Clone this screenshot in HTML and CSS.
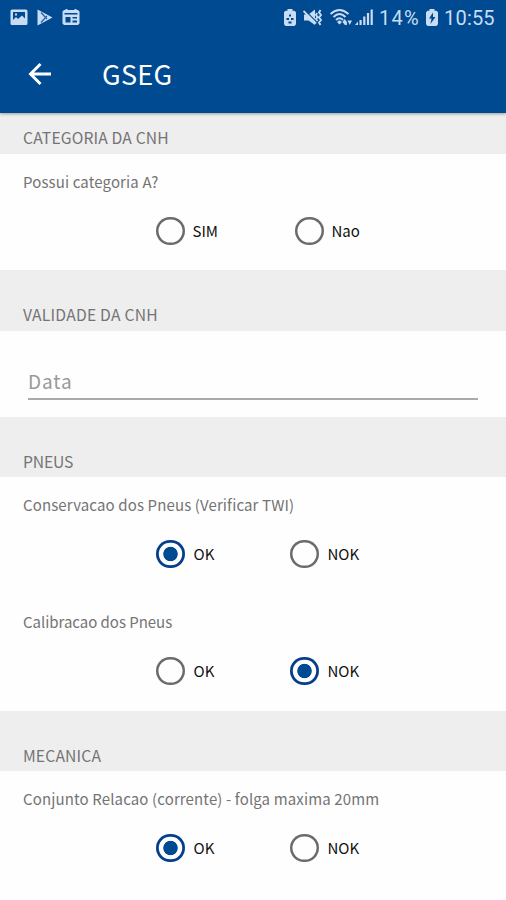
FILE: index.html
```html
<!DOCTYPE html>
<html lang="pt-BR">
<head>
<meta charset="utf-8">
<title>GSEG</title>
<link rel="stylesheet" href="styles.css">
</head>
<body>
<header class="app-header">
  <div class="status-bar">
    <div class="status-left">
      <svg width="18" height="18" viewBox="0 0 18 18"><path fill="currentColor" fill-rule="evenodd" d="M2 .5h14A1.500 1.500 0 0 1 17.500 2v12.500A1.500 1.500 0 0 1 16 16H2A1.500 1.500 0 0 1 .5 14.500V2A1.500 1.500 0 0 1 2 .5zM3 3v8l3-3 2 2 4-3.500 3 3V3zm2 1.500h2v2H5z"/></svg>
      <svg width="16" height="18" viewBox="0 0 16 18"><path fill="currentColor" d="M.5.5 15.500 8.500.5 16.500z"/><path d="M4 3.500l6 6.500M4 13.500l6-6.500" stroke="#26609f" stroke-width="1.200"/></svg>
      <svg width="18" height="18" viewBox="0 0 18 18"><path fill="currentColor" fill-rule="evenodd" d="M2 1h1.500V0h2v1h7V0h2v1H16l1.500 1.500v12L16 16H2L.5 14.500v-12zM2.500 4v1.500h13V4zM3.500 8v5.500h5V8zm7 0v1.500h4.500V8zm0 3.500v2h4.500v-2z"/></svg>
    </div>
    <div class="status-right">
      <svg class="i-saver" width="12" height="18" viewBox="0 0 12 18"><path fill="currentColor" fill-rule="evenodd" d="M3.500 0h5v1.800h2L12 3.300v12L10.500 17h-9L0 15.300v-12l1.500-1.500h2zM5 5.500v2h2v-2zM2.500 9v2H5V9zM7 9v2h2.500V9zM4.500 12.500v2h3v-2z"/></svg>
      <svg class="i-mute" width="20" height="18" viewBox="0 0 20 18"><path fill="currentColor" d="M1 5.500h4.500l6.500-5v15.500l-6.500-4.500H1z"/><path d="M1 .5 14 13.500" stroke="#004a91" stroke-width="1.300"/><path d="M.5 2l12.500 12.500" stroke="currentColor" stroke-width="1.800"/><path d="M14 4l-1 2 1.500 2-1.500 2 1.500 2M17.500 1l-1.500 2.500 2 2.500-2 2.500 2 2.500-2 2.500 1.500 2.500" fill="none" stroke="currentColor" stroke-width="1.900"/></svg>
      <svg class="i-wifi" width="23" height="18" viewBox="0 0 23 18"><path d="M.5 5Q9.500-3 18.500 5M3.500 8Q9.500 2 15.500 8M6 11Q9.500 7.500 13 11" fill="none" stroke="currentColor" stroke-width="1.900"/><path fill="currentColor" d="m7 13 2.500-1.800L12 13l-2.500 2.500zM12.500 13l2.200-3 2.200 3v3h-2zM17.500 11.500H22L19.700 16z"/></svg>
      <svg class="i-signal" width="19" height="18" viewBox="0 0 19 18"><path fill="currentColor" d="M0 16l3-3.500V16zM4.500 11h2.200v5H4.500zM8.200 7.500h2.200V16H8.200zM11.900 4h2.200v12h-2.200zM15.600.5h2.200V16h-2.200z"/></svg>
      <span class="percent">14%</span>
      <svg class="i-battery" width="12" height="18" viewBox="0 0 12 18"><path fill="currentColor" fill-rule="evenodd" d="M3.500 0h5v1.800h2L12 3.300v12L10.500 17h-9L0 15.300v-12l1.500-1.500h2zM7 3.500 3 9.500h2.500L4.500 15l5-7H7z"/></svg>
      <span class="clock">10:55</span>
    </div>
  </div>
  <div class="toolbar">
    <svg class="back" width="24" height="24" viewBox="0 0 24 24"><path d="M23 12H2.500M12.500 2 2.500 12l10 10" fill="none" stroke="#fff" stroke-width="2.900"/></svg>
    <h1 class="title">GSEG</h1>
  </div>
</header>
<main>
  <h2 class="section first">CATEGORIA DA CNH</h2>
  <div class="question q-category">
    <p class="prompt">Possui categoria A?</p>
    <div class="options wide">
      <span class="option"><i class="radio"></i><span>SIM</span></span>
      <span class="option"><i class="radio"></i><span>Nao</span></span>
    </div>
  </div>
  <h2 class="section validade">VALIDADE DA CNH</h2>
  <div class="date-panel"><div class="date-field">Data</div></div>
  <h2 class="section pneus">PNEUS</h2>
  <div class="question q-twi">
    <p class="prompt">Conservacao dos Pneus (Verificar TWI)</p>
    <div class="options">
      <span class="option"><i class="radio checked"></i><span>OK</span></span>
      <span class="option"><i class="radio"></i><span>NOK</span></span>
    </div>
  </div>
  <div class="question q-calibration">
    <p class="prompt calibration">Calibracao dos Pneus</p>
    <div class="options">
      <span class="option"><i class="radio"></i><span>OK</span></span>
      <span class="option"><i class="radio checked"></i><span>NOK</span></span>
    </div>
  </div>
  <h2 class="section mecanica">MECANICA</h2>
  <div class="question">
    <p class="prompt">Conjunto Relacao (corrente) - folga maxima 20mm</p>
    <div class="options">
      <span class="option"><i class="radio checked"></i><span>OK</span></span>
      <span class="option"><i class="radio"></i><span>NOK</span></span>
    </div>
  </div>
</main>
</body>
</html>
```
FILE: styles.css
```css
* { box-sizing: border-box; }
body {
  margin: 0;
  height: 900px;
  overflow: hidden;
  background: #fefefe;
  color: #747474;
  font-family: "Noto Sans CJK SC", "Noto Sans", sans-serif;
}
h1, h2, p { margin: 0; font-weight: 400; }
svg { display: block; flex: none; }

.app-header {
  position: relative;
  height: 113px;
  background: #004a91;
  color: #c8dcf4;
  box-shadow: 0 1px 3px rgba(0, 0, 0, .35);
}
.status-bar {
  display: flex;
  justify-content: space-between;
  height: 36px;
  padding: 9px 10px 0;
}
.status-left { display: flex; gap: 9px; }
.status-right { display: flex; width: 212px; }
.i-mute { margin-left: 7px; }
.i-wifi { margin-left: 7px; }
.i-signal { margin-left: 2px; }
.percent, .clock {
  font-family: Roboto, sans-serif;
  font-size: 20px;
  line-height: 18px;
  white-space: nowrap;
}
.percent { width: 41px; margin-left: 5px; letter-spacing: 1.200px; }
.i-battery { margin-left: 6px; }
.clock { margin-left: 6px; letter-spacing: .2px; }

.toolbar {
  display: flex;
  align-items: center;
  height: 76px;
  padding-left: 28px;
}
.title {
  margin-left: 50px;
  color: #fff;
  font-size: 27px;
  line-height: 40px;
  letter-spacing: .3px;
}

.section {
  height: 61px;
  padding: 34px 23px 0;
  background: #eee;
  font-size: 15.700px;
  line-height: 22px;
  letter-spacing: .13px;
}
.section.first { height: 41px; padding-top: 14px; }
.section.validade { letter-spacing: .22px; }
.section.pneus, .section.mecanica { height: 60px; }
.section.pneus { letter-spacing: -.15px; }

.question { padding-top: 17px; }
.q-category { height: 116px; }
.q-twi { height: 117px; }
.q-calibration { height: 117px; }
.prompt {
  padding-left: 23px;
  font-size: 15px;
  line-height: 22px;
  letter-spacing: .13px;
  white-space: nowrap;
}
.prompt.calibration { letter-spacing: -.03px; }
.options {
  display: grid;
  grid-template-columns: 134px 1fr;
  margin-top: 24px;
  padding-left: 156px;
}
.options.wide { grid-template-columns: 139px 1fr; }
.option {
  display: flex;
  align-items: center;
  gap: 9px;
  height: 28px;
  color: #111;
  font-size: 15px;
  line-height: 22px;
}
.options.wide .option { gap: 8px; }
.radio {
  display: block;
  width: 28.500px;
  height: 28.500px;
  border-radius: 50%;
  box-shadow: inset 0 0 0 2.500px #6b6b6b;
}
.radio.checked {
  background: radial-gradient(circle, #004a91 6.800px, transparent 7.600px);
  box-shadow: inset 0 0 0 2.800px #053f8c;
}

.date-panel { height: 86px; padding: 34px 28px 0; }
.date-field {
  height: 35px;
  border-bottom: 2px solid #aaa;
  color: #999;
  font-size: 19px;
  line-height: 32px;
  letter-spacing: .9px;
}
```
